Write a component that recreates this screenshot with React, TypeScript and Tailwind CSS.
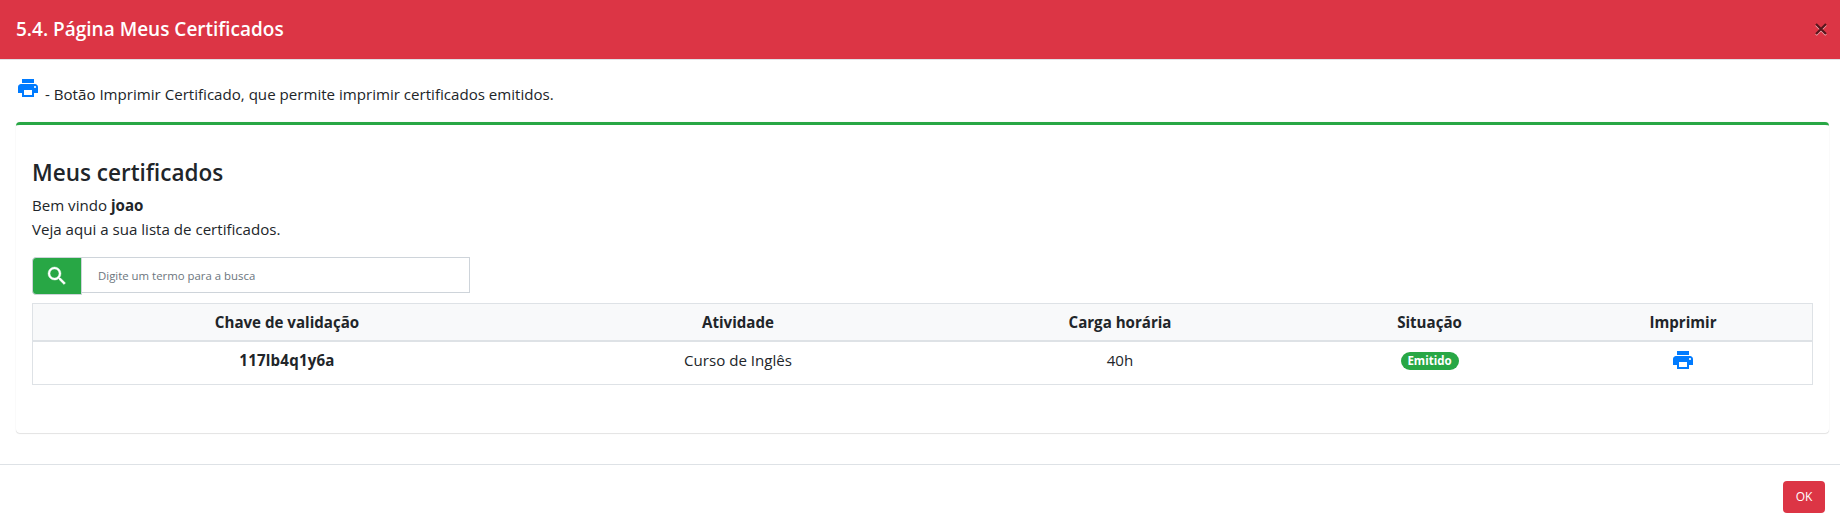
import { MdPrint } from 'react-icons/md';

const columns = ['Chave de validação', 'Atividade', 'Carga horária', 'Situação', 'Imprimir'];

function SearchIcon() {
  return (
    <svg className="size-6" viewBox="0 0 24 24" fill="currentColor" stroke="currentColor" strokeWidth="0.4">
      <path d="M15.5 14h-.79l-.28-.27A6.471 6.471 0 0 0 16 9.5 6.5 6.5 0 1 0 9.5 16c1.61 0 3.09-.59 4.23-1.57l.27.28v.79l5 4.99L20.49 19l-4.99-5zm-6 0C7.01 14 5 11.99 5 9.5S7.01 5 9.5 5 14 7.01 14 9.5 11.99 14 9.5 14z" />
    </svg>
  );
}

export default function App() {
  return (
    <div className="flex h-[527px] w-full flex-col bg-white font-['Open_Sans',sans-serif] text-[15.1px] leading-6 text-[#212529]">
      <header className="flex h-[60px] shrink-0 items-center justify-between border-b border-[#dee2e6] bg-[#dc3545] pl-4 pr-3">
        <h5 className="-mt-[2px] text-[19px] font-semibold text-white">5.4. Página Meus Certificados</h5>
        <button className="opacity-60" aria-label="Fechar">
          <svg className="mt-[-3px] h-[16px] w-[14px]" viewBox="0 0 14 16" fill="none" strokeWidth="2.2">
            <path d="M2 5l10 10M12 5L2 15" stroke="#fff" />
            <path d="M2 4l10 10M12 4L2 14" stroke="#000" />
          </svg>
        </button>
      </header>
      <main className="flex flex-col pl-4 pr-[11px] pt-4">
        <p className="flex h-[46px]">
          <MdPrint className="size-6 text-[#007bff]" />
          <span className="ml-[5px] mt-[6px] whitespace-nowrap">- Botão Imprimir Certificado, que permite imprimir certificados emitidos.</span>
        </p>
        <section className="h-[311px] rounded-[4px] border-t-[3px] border-[#28a745] px-4 pt-[33px] shadow-[0_0_1px_rgba(0,0,0,0.13),0_1px_1px_rgba(0,0,0,0.1)]">
          <h4 className="mb-[6px] text-[22.5px] font-semibold leading-[29px]">Meus certificados</h4>
          <p>Bem vindo <b>joao</b></p>
          <p>Veja aqui a sua lista de certificados.</p>
          <div className="mt-[16px] flex h-[38px] w-[438px] items-start">
            <button className="flex h-[38px] w-[50px] items-center justify-center rounded-l-[4px] border border-[#ced4da] bg-[#28a745] text-white" aria-label="Buscar">
              <SearchIcon />
            </button>
            <input
              className="h-9 min-w-0 flex-1 border border-l-0 border-[#ced4da] pl-4 pt-[1px] text-[11.4px] outline-none placeholder:text-[#6c757d]"
              placeholder="Digite um termo para a busca"
            />
          </div>
          <table className="mt-2 w-[1781px] table-fixed border-separate border-spacing-0 border border-[#dee2e6] text-center">
            <colgroup>
              <col className="w-[508px]" />
              <col className="w-[394px]" />
              <col className="w-[370px]" />
              <col className="w-[249px]" />
              <col className="w-[258px]" />
            </colgroup>
            <thead>
              <tr className="h-[38px] bg-[#f8f9fa]">
                {columns.map((name) => <th key={name} className="border-b-2 border-[#dee2e6] p-0 font-bold">{name}</th>)}
              </tr>
            </thead>
            <tbody>
              <tr className="h-[42px] align-top">
                <td className="p-0 pt-[6px] font-bold tracking-[0.2px]">117lb4q1y6a</td>
                <td className="p-0 pt-[6px]">Curso de Inglês</td>
                <td className="p-0 pt-[6px]">40h</td>
                <td className="p-0 pt-[10px]">
                  <span className="mx-auto block h-[18px] w-[58px] rounded-full bg-[#28a745] text-[11.5px] font-bold leading-[18px] text-white">Emitido</span>
                </td>
                <td className="p-0 pt-[6px]"><MdPrint className="mx-auto size-6 text-[#007bff]" /></td>
              </tr>
            </tbody>
          </table>
        </section>
      </main>
      <footer className="mt-auto flex h-[63px] shrink-0 justify-end border-t border-[#dee2e6] pr-[15px] pt-4">
        <button className="h-8 w-[42px] rounded-[4px] bg-[#dc3545] text-[12px] text-white">OK</button>
      </footer>
    </div>
  );
}
